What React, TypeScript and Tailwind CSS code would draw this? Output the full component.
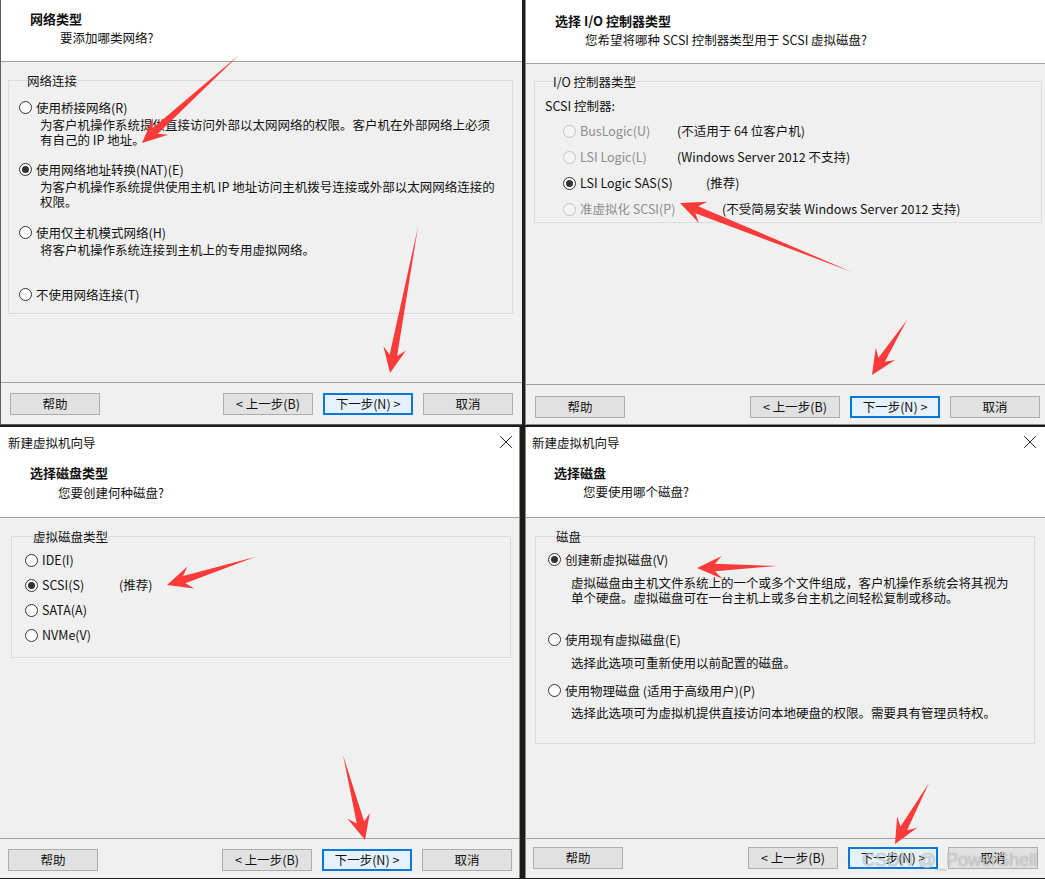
import { X } from 'lucide-react';
import type { ReactNode } from 'react';

const Radio = ({ checked = false, disabled = false }: { checked?: boolean; disabled?: boolean }) => (
  <span
    className={
      disabled
        ? 'w-[13px] h-[13px] shrink-0 rounded-full border border-[#c4c4c4] bg-[#f4f4f4] flex items-center justify-center'
        : 'w-[13px] h-[13px] shrink-0 rounded-full border border-[#333333] bg-white flex items-center justify-center'
    }
  >
    {checked && <span className="w-[7px] h-[7px] rounded-full bg-[#333333]" />}
  </span>
);

const Btn = ({ label, primary = false }: { label: string; primary?: boolean }) => (
  <div
    className={
      primary
        ? 'w-[90px] h-[22px] bg-[#e5f1fb] border-2 border-[#0078d7] flex items-center justify-center leading-none'
        : 'w-[90px] h-[22px] bg-[#e1e1e1] border border-[#adadad] flex items-center justify-center leading-none'
    }
  >
    {label}
  </div>
);

const Footer = ({ className }: { className: string }) => (
  <div className={`flex-1 border-t border-[#a0a0a0] flex justify-between items-start ${className}`}>
    <Btn label="帮助" />
    <div className="flex gap-[10px]">
      <Btn label="< 上一步(B)" />
      <Btn label="下一步(N) >" primary />
      <Btn label="取消" />
    </div>
  </div>
);

const TitleBar = ({ className }: { className: string }) => (
  <div className={`h-[30px] bg-white flex items-center justify-between ${className}`}>
    <span className="leading-[15px]">新建虚拟机向导</span>
    <X size={22} strokeWidth={1} color="#111" />
  </div>
);

const Header = ({ title, subtitle, className, subClass }: { title: string; subtitle: string; className: string; subClass: string }) => (
  <div className={`bg-white border-b border-[#a0a0a0] ${className}`}>
    <div className="font-bold text-[13px] leading-[15px]">{title}</div>
    <div className={`leading-[15px] ${subClass}`}>{subtitle}</div>
  </div>
);

const Option = ({ label, checked, desc, className, descClass }: { label: string; checked?: boolean; desc?: ReactNode; className: string; descClass?: string }) => (
  <div className={className}>
    <div className="flex items-center h-[15px] gap-[4px] whitespace-nowrap">
      <Radio checked={checked} />
      <span className="leading-[15px]">{label}</span>
    </div>
    {desc && <div className={`whitespace-nowrap ${descClass}`}>{desc}</div>}
  </div>
);

const arrows = [
  [239, 55, 142, 143],
  [418, 227, 390, 373],
  [852, 272, 680, 203],
  [907, 320, 872, 375],
  [255, 557, 167, 585],
  [343, 755, 365, 840],
  [777, 566, 697, 568],
  [929, 783, 895, 844],
];

function arrowPoints(x1: number, y1: number, x2: number, y2: number) {
  const dx = x2 - x1;
  const dy = y2 - y1;
  const len = Math.hypot(dx, dy);
  const ux = dx / len;
  const uy = dy / len;
  const px = -uy;
  const py = ux;
  const head = 25;
  const headW = 11.5;
  const neckW = 3.8;
  const nx = x2 - ux * head * 0.72;
  const ny = y2 - uy * head * 0.72;
  const bx = x2 - ux * head;
  const by = y2 - uy * head;
  const pts = [
    [x1, y1],
    [nx + px * neckW, ny + py * neckW],
    [bx + px * headW, by + py * headW],
    [x2, y2],
    [bx - px * headW, by - py * headW],
    [nx - px * neckW, ny - py * neckW],
  ];
  return pts.map((p) => p.join(',')).join(' ');
}

export default function App() {
  return (
    <div className="relative w-[1045px] h-[879px] overflow-hidden bg-[#1c1d19] text-[12.5px] text-[#111] font-['Noto_Sans_CJK_SC',sans-serif]">
      {/* top row */}
      <div className="flex justify-between items-start h-[427px]">
        {/* network type */}
        <div className="w-[522px] h-[425px] flex flex-col bg-[#f0f0f0] border-l border-b border-[#5c5c5c]">
          <Header title="网络类型" subtitle="要添加哪类网络?" className="h-[62px] pt-[11px] pl-[29px]" subClass="mt-[4px] ml-[30px]" />
          <div className="h-[320px]">
            <fieldset className="ml-[7px] mt-[11px] w-[505px] border border-[#dcdcdc] pl-[10px] pb-[11px]">
              <legend className="ml-[8px] leading-[15px]">网络连接</legend>
              <Option
                className="mt-[12px]"
                label="使用桥接网络(R)"
                descClass="ml-[21px] mt-[2px] leading-[15px]"
                desc={
                  <>
                    为客户机操作系统提供直接访问外部以太网网络的权限。客户机在外部网络上必须
                    <br />
                    有自己的 IP 地址。
                  </>
                }
              />
              <Option
                className="mt-[15px]"
                checked
                label="使用网络地址转换(NAT)(E)"
                descClass="ml-[21px] mt-[2px] leading-[15px]"
                desc={
                  <>
                    为客户机操作系统提供使用主机 IP 地址访问主机拨号连接或外部以太网网络连接的
                    <br />
                    权限。
                  </>
                }
              />
              <Option
                className="mt-[16px]"
                label="使用仅主机模式网络(H)"
                descClass="ml-[21px] mt-[2px] leading-[15px]"
                desc="将客户机操作系统连接到主机上的专用虚拟网络。"
              />
              <Option className="mt-[30px]" label="不使用网络连接(T)" />
            </fieldset>
          </div>
          <Footer className="pt-[10px] pl-[9px] pr-[9px]" />
        </div>

        {/* io controller */}
        <div className="w-[520px] h-[425px] flex flex-col bg-[#f0f0f0] border-l border-b border-[#8c8c8c]">
          <Header title="选择 I/O 控制器类型" subtitle="您希望将哪种 SCSI 控制器类型用于 SCSI 虚拟磁盘?" className="h-[64px] pt-[13px] pl-[29px]" subClass="mt-[4px] ml-[30px]" />
          <div className="h-[320px]">
            <fieldset className="ml-[8px] mt-[10px] w-[508px] border border-[#dcdcdc] pl-[10px]">
              <legend className="ml-[8px] leading-[15px]">I/O 控制器类型</legend>
              <div className="mt-[9px] leading-[15px]">SCSI 控制器:</div>
              <div className="mt-[5px] ml-[18px]">
                <div className="flex items-center h-[26px] whitespace-nowrap">
                  <span className="flex items-center gap-[4px] w-[114px] text-[#8d8d8d]">
                    <Radio disabled />
                    BusLogic(U)
                  </span>
                  <span>(不适用于 64 位客户机)</span>
                </div>
                <div className="flex items-center h-[26px] whitespace-nowrap">
                  <span className="flex items-center gap-[4px] w-[114px] text-[#8d8d8d]">
                    <Radio disabled />
                    LSI Logic(L)
                  </span>
                  <span>(Windows Server 2012 不支持)</span>
                </div>
                <div className="flex items-center h-[26px] whitespace-nowrap">
                  <span className="flex items-center gap-[4px] w-[143px]">
                    <Radio checked />
                    LSI Logic SAS(S)
                  </span>
                  <span>(推荐)</span>
                </div>
                <div className="flex items-center h-[26px] whitespace-nowrap">
                  <span className="flex items-center gap-[4px] w-[159px] text-[#8d8d8d]">
                    <Radio disabled />
                    准虚拟化 SCSI(P)
                  </span>
                  <span>(不受简易安装 Windows Server 2012 支持)</span>
                </div>
              </div>
            </fieldset>
          </div>
          <Footer className="pt-[11px] pl-[9px] pr-[5px]" />
        </div>
      </div>

      {/* bottom row */}
      <div className="flex justify-between items-start">
        {/* disk type */}
        <div className="w-[520px] h-[451px] flex flex-col bg-[#f0f0f0] border-r border-[#8c8c8c]">
          <TitleBar className="pl-[8px] pr-[2px]" />
          <Header title="选择磁盘类型" subtitle="您要创建何种磁盘?" className="h-[61px] pt-[8px] pl-[30px]" subClass="mt-[5px] ml-[28px]" />
          <div className="h-[320px]">
            <fieldset className="ml-[11px] mt-[11px] w-[500px] border border-[#dcdcdc] pl-[13px] pb-[9px]">
              <legend className="ml-[8px] leading-[15px]">虚拟磁盘类型</legend>
              <div className="mt-[4px]">
                <div className="flex items-center h-[25px] gap-[4px]">
                  <Radio />
                  IDE(I)
                </div>
                <div className="flex items-center h-[25px] whitespace-nowrap">
                  <span className="flex items-center gap-[4px] w-[94px]">
                    <Radio checked />
                    SCSI(S)
                  </span>
                  <span>(推荐)</span>
                </div>
                <div className="flex items-center h-[25px] gap-[4px]">
                  <Radio />
                  SATA(A)
                </div>
                <div className="flex items-center h-[25px] gap-[4px]">
                  <Radio />
                  NVMe(V)
                </div>
              </div>
            </fieldset>
          </div>
          <Footer className="pt-[10px] pl-[8px] pr-[7px]" />
        </div>

        {/* select disk */}
        <div className="w-[520px] h-[451px] flex flex-col bg-[#f0f0f0] border-l border-[#8c8c8c]">
          <TitleBar className="pl-[6px] pr-[4px]" />
          <Header title="选择磁盘" subtitle="您要使用哪个磁盘?" className="h-[61px] pt-[8px] pl-[28px]" subClass="mt-[4px] ml-[29px]" />
          <div className="h-[320px]">
            <fieldset className="ml-[9px] mt-[11px] w-[500px] border border-[#dcdcdc] pl-[12px] pb-[23px]">
              <legend className="ml-[8px] leading-[15px]">磁盘</legend>
              <Option
                className="mt-[8px]"
                checked
                label="创建新虚拟磁盘(V)"
                descClass="ml-[23px] mt-[8px] leading-[15px]"
                desc={
                  <>
                    虚拟磁盘由主机文件系统上的一个或多个文件组成，客户机操作系统会将其视为
                    <br />
                    单个硬盘。虚拟磁盘可在一台主机上或多台主机之间轻松复制或移动。
                  </>
                }
              />
              <Option
                className="mt-[27px]"
                label="使用现有虚拟磁盘(E)"
                descClass="ml-[23px] mt-[8px] leading-[15px]"
                desc="选择此选项可重新使用以前配置的磁盘。"
              />
              <Option
                className="mt-[13px]"
                label="使用物理磁盘 (适用于高级用户)(P)"
                descClass="ml-[23px] mt-[7px] leading-[15px]"
                desc="选择此选项可为虚拟机提供直接访问本地硬盘的权限。需要具有管理员特权。"
              />
            </fieldset>
          </div>
          <Footer className="pt-[8px] pl-[7px] pr-[7px]" />
        </div>
      </div>

      {/* annotation arrows */}
      <svg className="absolute inset-0 pointer-events-none" width={1045} height={879}>
        {arrows.map(([x1, y1, x2, y2], i) => (
          <polygon key={i} points={arrowPoints(x1, y1, x2, y2)} fill="#fb3a3a" />
        ))}
      </svg>

      <div className="absolute left-[862px] top-[849px] text-[18px] leading-[22px] whitespace-nowrap font-['Liberation_Sans',sans-serif] text-white/60 [text-shadow:0_0_1px_rgba(0,0,0,0.45)]">
        CSDN @_PowerShell
      </div>
    </div>
  );
}
